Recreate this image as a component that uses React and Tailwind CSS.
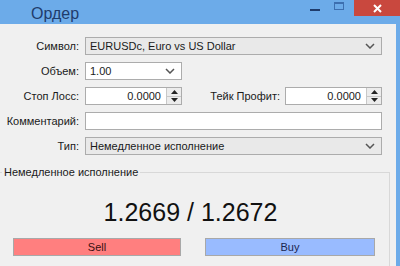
import React from 'react';

const Chevron = () => (
  <svg width="10" height="6" viewBox="0 0 10 6" className="text-[#555]">
    <path d="M1 1 L5 5 L9 1" fill="none" stroke="currentColor" strokeWidth="1.5" />
  </svg>
);

const Spinner = () => (
  <div className="flex flex-col w-[15px] h-full border-l border-[#c8c8c8]">
    <div className="flex-1 flex items-center justify-center bg-[#ececec] border-b border-[#c8c8c8]">
      <svg width="7" height="4" viewBox="0 0 7 4"><path d="M0 4 L3.5 0 L7 4 Z" fill="#222" /></svg>
    </div>
    <div className="flex-1 flex items-center justify-center bg-[#ececec]">
      <svg width="7" height="4" viewBox="0 0 7 4"><path d="M0 0 L3.5 4 L7 0 Z" fill="#222" /></svg>
    </div>
  </div>
);

const Row = ({ label, children }) => (
  <div className="flex items-center h-[18px]">
    <span className="w-[80px] pr-[1px] text-right">{label}</span>
    <div className="ml-[5px] flex items-center h-full">{children}</div>
  </div>
);

const Combo = ({ value, width, white }) => (
  <div
    className={`flex items-center justify-between h-[18px] border border-[#acacac] pl-[4px] pr-[6px] ${white ? 'bg-white' : 'bg-[#e9e9e9]'}`}
    style={{ width }}
  >
    <span>{value}</span>
    <Chevron />
  </div>
);

const NumInput = ({ value }) => (
  <div className="flex items-center h-[18px] w-[97px] bg-white border border-[#acacac]">
    <span className="flex-1 text-right pr-[5px]">{value}</span>
    <Spinner />
  </div>
);

export default function App() {
  return (
    <div
      className="w-[400px] h-[266px] overflow-hidden bg-[#6cabe9] flex flex-col text-[11px] text-[#1a1a1a]"
      style={{ fontFamily: '"Liberation Sans", Arial, sans-serif' }}
    >
      {/* title bar */}
      <div className="h-[24px] flex items-start shrink-0">
        <span className="ml-[31px] mt-[2px] text-[16px] text-[#1f3c6c]">Ордер</span>
        <div className="ml-auto flex items-start h-full">
          <div className="w-[10px] h-[2px] bg-[#1f3c6c] mt-[9px] mr-[14px]" />
          <div className="w-[10px] h-[8px] border border-[#3d6fb0] border-t-2 mt-[2px] mr-[10px]" />
          <div className="w-[46px] h-[16px] bg-[#c9483e] flex items-center justify-center">
            <svg width="9" height="9" viewBox="0 0 9 9">
              <path d="M1 1 L8 8 M8 1 L1 8" stroke="#fff" strokeWidth="2" />
            </svg>
          </div>
        </div>
      </div>

      {/* window body */}
      <div className="flex-1 flex mr-[4px] bg-[#f0f0f0]">
        <div className="flex-1 flex flex-col pt-[13px]">
          <div className="flex flex-col gap-[7px]">
            <Row label="Символ:">
              <Combo value="EURUSDc, Euro vs US Dollar" width={297} />
            </Row>
            <Row label="Объем:">
              <Combo value="1.00" width={97} white />
            </Row>
            <Row label="Стоп Лосс:">
              <NumInput value="0.0000" />
              <span className="w-[98px] text-right">Тейк Профит:</span>
              <div className="ml-[5px] h-full">
                <NumInput value="0.0000" />
              </div>
            </Row>
            <Row label="Комментарий:">
              <div className="w-[297px] h-[18px] bg-white border border-[#acacac]" />
            </Row>
            <Row label="Тип:">
              <Combo value="Немедленное исполнение" width={297} />
            </Row>
          </div>

          <fieldset className="mt-[11px] flex-1 border-t border-r border-[#d8d8d8] mr-[6px] pl-[2px]">
            <legend className="px-[2px] leading-[12px]">Немедленное исполнение</legend>
            <div className="mt-[20px] text-center text-[25px] leading-[28px] text-[#111] pr-[10px]">
              1.2669 / 1.2672
            </div>
            <div className="mt-[12px] flex items-center">
              <button className="ml-[11px] w-[168px] h-[18px] bg-[#ff7f7f] border border-[#a8a8a8] text-[11px] text-[#3a1010]">
                Sell
              </button>
              <button className="ml-[24px] w-[170px] h-[18px] bg-[#99bbff] border border-[#a8a8a8] text-[11px] text-[#1a2550]">
                Buy
              </button>
            </div>
          </fieldset>
        </div>
      </div>
    </div>
  );
}
